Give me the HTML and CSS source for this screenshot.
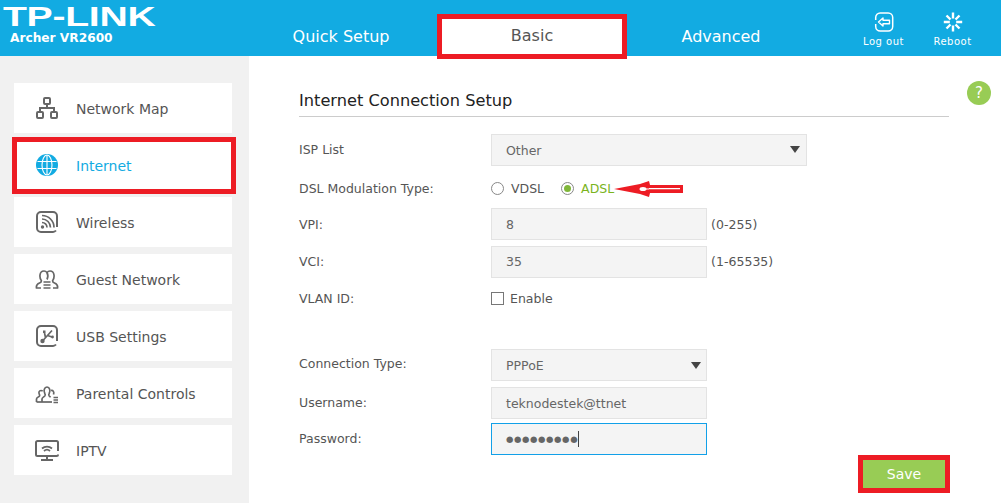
FILE: index.html
```html
<!DOCTYPE html>
<html lang="en">
<head>
<meta charset="utf-8">
<title>Archer VR2600</title>
<link rel="stylesheet" href="styles.css">
</head>
<body>
<header class="topbar">
  <div class="brand">
    <div class="logo">TP-LINK</div>
    <div class="model">Archer VR2600</div>
  </div>
  <nav class="tabs">
    <a class="tab">Quick Setup</a>
    <a class="tab tab-active">Basic</a>
    <a class="tab">Advanced</a>
  </nav>
  <div class="tools">
    <a class="tool">
      <svg class="tool-icon" viewBox="0 0 20 20"><rect x="1.700" y="1" width="17" height="18" rx="4.500" fill="none" stroke="#fff" stroke-width="1.500"/><path d="M4.500 10 9 6v2.300h6.500v3.400H9V14z" fill="#12abe2" stroke="#fff" stroke-width="1.400" stroke-linejoin="round"/><rect x="0" y="8" width="3" height="4" fill="#12abe2"/></svg>
      <span>Log out</span>
    </a>
    <a class="tool">
      <svg class="tool-icon" viewBox="0 0 20 20" stroke="#fff" stroke-width="2.400" fill="none"><path d="M10 .5v6M10 13.500v6M.8 10h6M13.200 10h6M3.500 3.500l4 4M12.500 12.500l4 4M16.500 3.500l-4 4M7.500 12.500l-4 4"/></svg>
      <span>Reboot</span>
    </a>
  </div>
</header>
<div class="main">
  <aside class="sidebar">
    <a class="menu-item">
      <svg class="menu-icon" viewBox="0 0 24 24" fill="none" stroke="#666" stroke-width="2"><rect x="9" y="2" width="6" height="6" rx="1"/><rect x="2" y="16" width="6" height="6" rx="1"/><rect x="16" y="16" width="6" height="6" rx="1"/><path d="M12 8v4M5 16v-4h14v4"/></svg>
      <span>Network Map</span>
    </a>
    <a class="menu-item menu-active">
      <svg class="menu-icon" viewBox="0 0 24 24"><circle cx="12" cy="12" r="11" fill="#12abe2"/><g fill="none" stroke="#fff" stroke-width="1.100"><ellipse cx="12" cy="12" rx="5" ry="10"/><path d="M12 2v20M2.500 8.500h19M2.500 15.500h19"/></g></svg>
      <span>Internet</span>
    </a>
    <a class="menu-item">
      <svg class="menu-icon" viewBox="0 0 24 24" fill="none" stroke="#666"><path d="M22 17v-11a4 4 0 0 0-4-4H6a4 4 0 0 0-4 4v12a4 4 0 0 0 4 4h12a4 4 0 0 0 3-1.500" stroke-width="2"/><path d="M7 12.500a5 5 0 0 1 5 5M7 9a8.500 8.500 0 0 1 8.500 8.500M7 5.500a12 12 0 0 1 12 12" stroke-width="1.700"/><circle cx="7.500" cy="17" r="1.700" fill="#666" stroke="none"/></svg>
      <span>Wireless</span>
    </a>
    <a class="menu-item">
      <svg class="menu-icon" viewBox="0 0 24 24" fill="none" stroke="#666" stroke-width="1.700"><path d="M6 21H1.500c-.5-2.500.5-4 3-5 1.500-.6 2-1.500 1.800-2.500C5 12 4.800 10 5 8c.3-2.500 2-4 4-4 1.200 0 2.200.5 3 1.500.8-1 1.800-1.500 3-1.500 2 0 3.700 1.500 4 4 .2 2 0 4-1.300 5.500-.2 1 .3 1.900 1.800 2.500 2.500 1 3.500 2.500 3 5H18"/><path d="M12 5.500c1 2 1 5 0 7"/><path d="M8.500 15h7M8.500 18h7M8.500 21h7"/></svg>
      <span>Guest Network</span>
    </a>
    <a class="menu-item">
      <svg class="menu-icon" viewBox="0 0 24 24" fill="none" stroke="#666"><path d="M22 17v-11a4 4 0 0 0-4-4H6a4 4 0 0 0-4 4v12a4 4 0 0 0 4 4h12a4 4 0 0 0 3-1.500" stroke-width="2"/><path d="M7.500 17 17 6.500M10.500 13.500l-1-4.500M12.500 11.500l4.500 1.500" stroke-width="1.700"/><circle cx="7.500" cy="17" r="2.200" fill="#666" stroke="none"/><rect x="8" y="6.500" width="2.500" height="2.500" fill="#666" stroke="none"/><circle cx="17.500" cy="13" r="1.400" fill="#666" stroke="none"/></svg>
      <span>USB Settings</span>
    </a>
    <a class="menu-item">
      <svg class="menu-icon" viewBox="0 0 24 24" fill="none" stroke="#666" stroke-width="1.700"><path d="M1.500 21v-3c0-1.500 1.500-2 2.500-2.500.8-.5.8-1.500.3-2.300-.8-1.400-.3-3.700 1.700-3.700.6 0 1.200.2 1.700.6"/><path d="M7 21v-3c0-1.500 1.800-2 2.800-3 .6-.7.6-1.500 0-2.500-1.500-2.800-.5-6.500 2.200-6.500s3.700 3.700 2.200 6.500c-.6 1-.6 1.800 0 2.500.5.500 1 .8 1.500 1.200"/><path d="M1.500 21H17"/><path d="M16 9.500c2-.5 3.500 1.500 2.500 4"/><path d="M18.500 16.500H23M18.500 19H23M18.500 21.500H23" stroke-width="1.500"/></svg>
      <span>Parental Controls</span>
    </a>
    <a class="menu-item">
      <svg class="menu-icon" viewBox="0 0 24 24" fill="none" stroke="#666"><path d="M23 13V4.500a1.500 1.500 0 0 0-1.500-1.500h-19A1.500 1.500 0 0 0 1 4.500v12A1.500 1.500 0 0 0 2.500 18h19a1.500 1.500 0 0 0 1.500-1.500" stroke-width="2"/><path d="M7 10.500a7.500 7.500 0 0 1 10 0M9 13a4.500 4.500 0 0 1 6 0" stroke-width="1.700"/><path d="M12 18v3M6 22h12" stroke-width="2"/></svg>
      <span>IPTV</span>
    </a>
  </aside>
  <section class="content">
    <h2 class="title">Internet Connection Setup</h2>
    <div class="help">?</div>
    <div class="row row-isp">
      <label class="label">ISP List</label>
      <div class="field select wide">Other<i class="caret caret-wide"></i></div>
    </div>
    <div class="row row-dsl">
      <label class="label">DSL Modulation Type:</label>
      <div class="radios">
        <span class="radio"></span><span class="radio-text">VDSL</span>
        <span class="radio radio-on"></span><span class="radio-text radio-text-on">ADSL</span>
      </div>
    </div>
    <div class="row row-vpi">
      <label class="label">VPI:</label>
      <div class="field">8</div><span class="hint">(0-255)</span>
    </div>
    <div class="row row-vci">
      <label class="label label-up">VCI:</label>
      <div class="field field-up">35</div><span class="hint hint-up">(1-65535)</span>
    </div>
    <div class="row row-vlan">
      <label class="label">VLAN ID:</label>
      <span class="check"></span><span class="check-text">Enable</span>
    </div>
    <div class="row row-conn">
      <label class="label">Connection Type:</label>
      <div class="field select">PPPoE<i class="caret"></i></div>
    </div>
    <div class="row row-user">
      <label class="label label-up">Username:</label>
      <div class="field">teknodestek@ttnet</div>
    </div>
    <div class="row row-pass">
      <label class="label">Password:</label>
      <div class="field field-focus"><span class="dots">●●●●●●●●●</span><i class="cursor"></i></div>
    </div>
    <div class="actions"><button class="save">Save</button></div>
  </section>
</div>
<div class="mark mark-tab"></div>
<div class="mark mark-menu"></div>
<svg class="arrow" viewBox="0 0 70 18"><path d="M1 9 27 4 36 1 37 5H70V13H37L36 17 27 14Z" fill="#ed1c24"/><path d="M30 9h6M36 8.700h31" stroke="#fff" stroke-width="1.200"/><ellipse cx="30" cy="9" rx="3.500" ry="2" fill="#fff"/></svg>
<div class="mark mark-save"></div>
</body>
</html>
```
FILE: styles.css
```css
* { box-sizing: border-box; }
html, body { margin: 0; padding: 0; }
body {
  position: relative;
  width: 1001px;
  height: 503px;
  overflow: hidden;
  background: #fff;
  font-family: "DejaVu Sans", Verdana, sans-serif;
  font-size: 13px;
  color: #555;
}
.topbar {
  height: 56px;
  display: flex;
  background: #12abe2;
  color: #fff;
}
.brand { width: 246px; padding: 6px 0 0 3px; }
.logo {
  font-family: "Liberation Sans", Arial, sans-serif;
  font-weight: 700;
  font-size: 27px;
  line-height: 22px;
  letter-spacing: -.2px;
  transform: scaleX(1.45);
  transform-origin: left center;
}
.model {
  margin: 2px 0 0 7px;
  font-size: 12.200px;
  line-height: 16px;
  font-weight: 700;
}
.tabs { display: flex; width: 571px; }
.tab {
  width: 190px;
  height: 59px;
  padding-top: 26px;
  text-align: center;
  font-size: 16px;
  line-height: 22px;
  color: #fff;
}
.tab-active { color: #555; background: #fff; margin: 14px 0 0 1px; height: 45px; padding-top: 11px; }
.tab-active + .tab { margin-left: -1px; }
.tools { display: flex; padding-top: 12px; margin-left: 37px; }
.tool {
  width: 59px;
  display: flex;
  flex-direction: column;
  align-items: center;
  font-size: 10px;
  line-height: 13px;
  letter-spacing: .5px;
}
.tool + .tool { margin-left: 10px; }
.tool-icon { width: 20px; height: 20px; margin-bottom: 3px; display: block; }
.main { display: flex; height: 447px; }
.sidebar {
  width: 249px;
  background: #f1f1f1;
  padding: 27px 17px 0 14px;
  display: flex;
  flex-direction: column;
  gap: 7px;
}
.menu-item {
  height: 50px;
  flex: none;
  background: #fff;
  display: flex;
  align-items: center;
  padding: 2px 0 0 21px;
  font-size: 14px;
  color: #555;
}
.menu-icon { width: 24px; height: 24px; margin: -3px 17px 0 0; flex: none; }
.menu-active { color: #12abe2; }
.content { position: relative; flex: 1; padding: 35px 52px 0 50px; }
.title {
  margin: 0 0 17px;
  height: 26px;
  border-bottom: 1px solid #ccc;
  font-size: 16.200px;
  line-height: 20px;
  font-weight: 400;
  color: #222;
}
.help {
  position: absolute;
  left: 718px;
  top: 25px;
  width: 24px;
  height: 24px;
  border-radius: 50%;
  background: #98cc55;
  color: #fff;
  text-align: center;
  font-size: 15px;
  line-height: 24px;
}
.row { display: flex; align-items: center; height: 32px; font-size: 12.500px; }
.label { width: 192px; flex: none; }
.row-isp .label { margin-top: -1px; }
.row-dsl { margin-top: 6px; }
.row-vpi { margin-top: 4px; }
.row-vci { margin-top: 6px; }
.row-vlan { margin-top: 4px; }
.row-conn { margin-top: 35px; }
.row-conn .label { margin-top: -4px; }
.row-user { margin-top: 6px; }
.row-pass { margin-top: 4px; }
.row-pass .label { margin-top: -1px; }
.label-up { margin-top: -2px; }
.field {
  position: relative;
  width: 216px;
  height: 32px;
  border: 1px solid #e3e3e3;
  background: #f4f4f4;
  padding-left: 14px;
  line-height: 32px;
  color: #666;
  flex: none;
}
.field-up { line-height: 30px; }
.wide { width: 316px; }
.caret {
  position: absolute;
  right: 5px;
  top: 12px;
  border: 5.500px solid transparent;
  border-top: 7px solid #444;
  border-bottom: 0;
}
.caret-wide { right: 6px; top: 11px; }
.hint { margin: 0 0 0 4px; letter-spacing: .03px; }
.hint-up { margin-top: -2px; }
.radios { display: flex; align-items: center; }
.radio {
  width: 13px;
  height: 13px;
  border: 1px solid #888;
  border-radius: 50%;
  background: #fff;
  display: flex;
  align-items: center;
  justify-content: center;
  flex: none;
}
.radio-on::after { content: ""; width: 7px; height: 7px; border-radius: 50%; background: #80b73a; }
.radio-text { margin: 0 17px 0 7px; }
.radio-text-on { color: #7ab41d; margin-right: 0; }
.check { width: 13px; height: 13px; border: 1px solid #777; background: #fff; flex: none; margin-right: 6px; }
.field-focus { border-color: #12a0e8; display: flex; align-items: center; }
.dots { font-size: 8.500px; letter-spacing: .6px; color: #666; font-family: "DejaVu Sans", sans-serif; }
.cursor { display: block; width: 1px; height: 16px; background: #444; }
.actions { display: flex; justify-content: flex-end; margin-top: 5px; }
.save {
  width: 82px;
  height: 28px;
  margin-right: 4px;
  border: 0;
  background: #98cc55;
  color: #fff;
  font: 14px "DejaVu Sans", Verdana, sans-serif;
}
.mark { position: absolute; border: 5px solid #ed1c24; }
.mark-tab { left: 437px; top: 14px; width: 190px; height: 45px; }
.mark-menu { left: 12px; top: 137px; width: 224px; height: 57px; }
.mark-save { left: 858px; top: 455px; width: 92px; height: 38px; }
.arrow { position: absolute; left: 613px; top: 180px; width: 70px; height: 18px; }
```
